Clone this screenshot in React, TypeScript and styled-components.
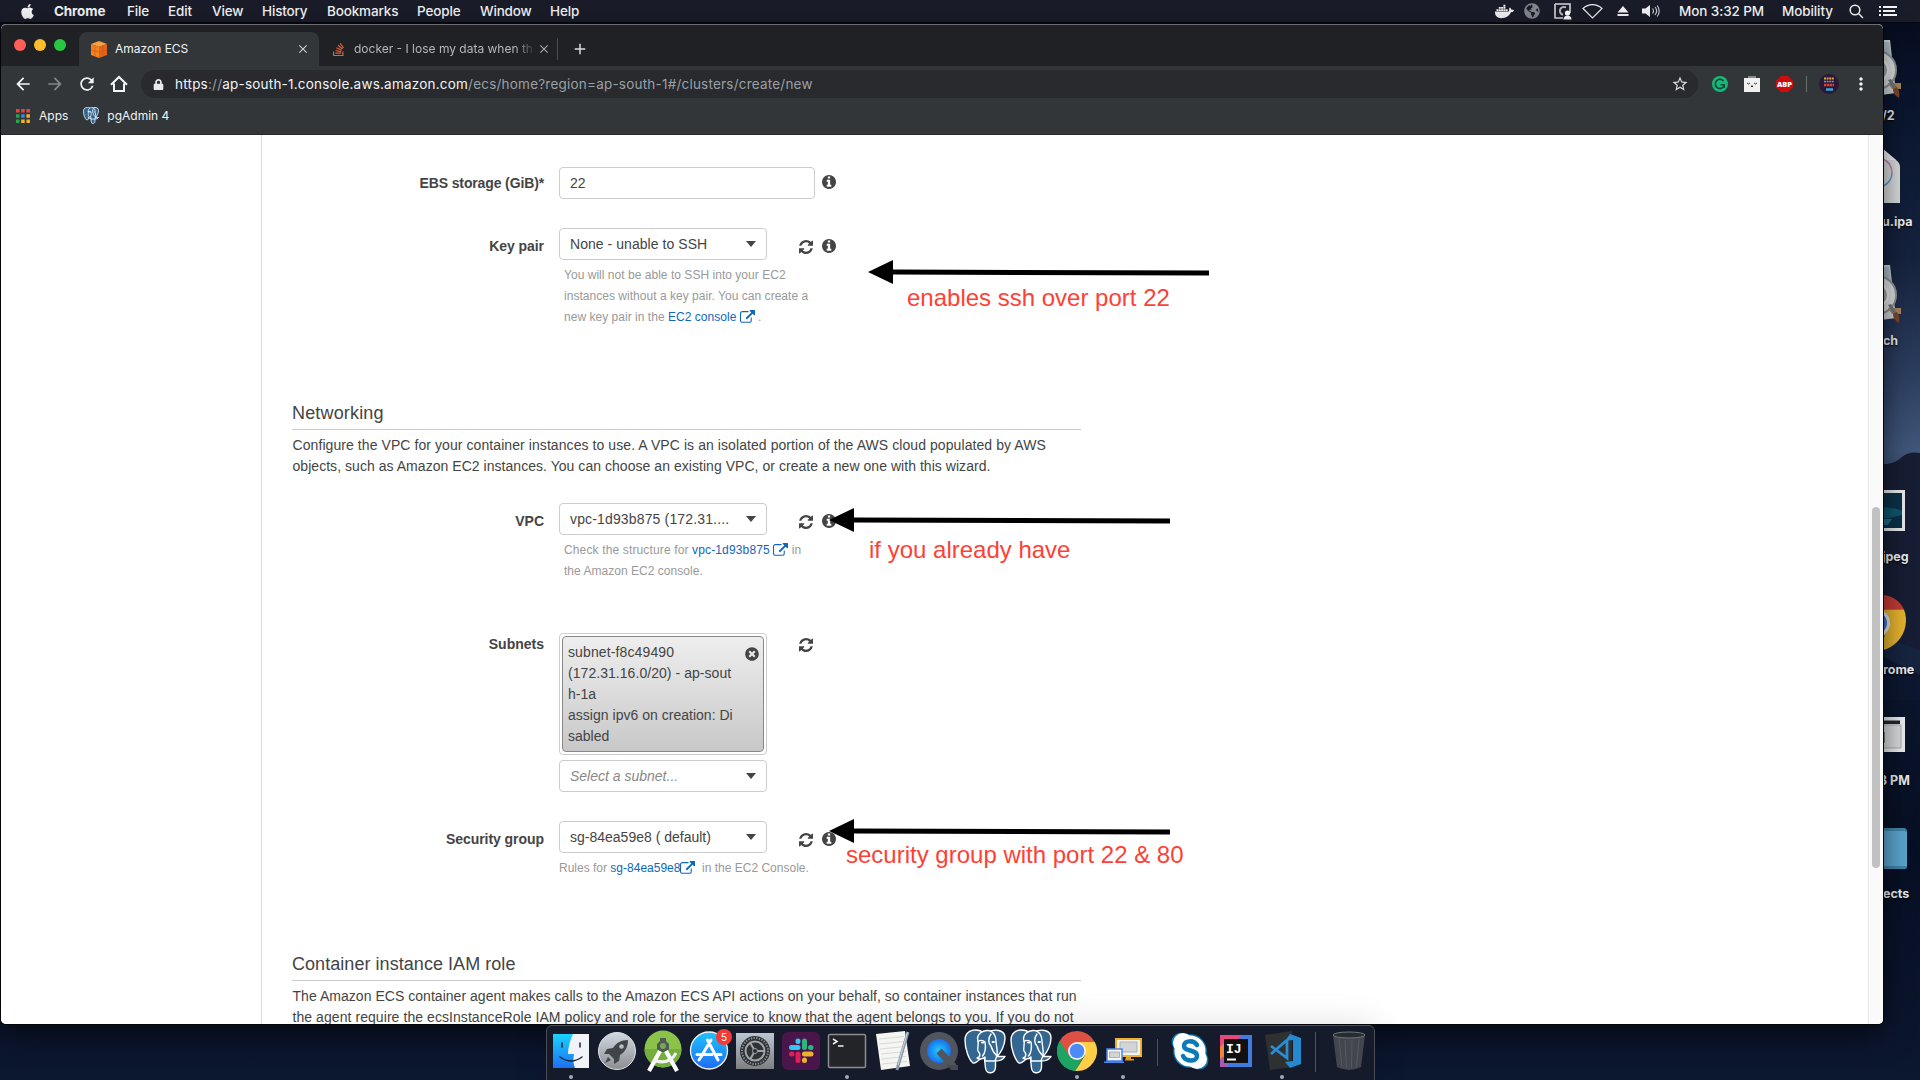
import React from 'react';
import styled, { createGlobalStyle, css } from 'styled-components';
import { FaApple, FaDocker, FaGlobeAmericas, FaTimesCircle, FaLock, FaSkype, FaStackOverflow } from 'react-icons/fa';
import { MdArrowBack, MdArrowForward, MdRefresh, MdStarBorder, MdMoreVert, MdClose, MdAdd } from 'react-icons/md';

const UI = `Inter, Roboto, "Liberation Sans", sans-serif`;
const TEXT = `"Liberation Sans", Arial, sans-serif`;

const Global = createGlobalStyle`
  *, *::before, *::after { box-sizing: border-box; }
  html, body { margin: 0; padding: 0; overflow: hidden; background: #0a1228; }
  svg { display: block; flex: none; }
`;

const Desktop = styled.div`
  position: relative;
  width: 1920px;
  height: 1080px;
  overflow: hidden;
  font-family: ${UI};
  background: linear-gradient(180deg, #070d20 22px, #0b1730 120px, #16233f 260px, #2b3d5e 370px, #40567a 450px, #0c1730 640px, #070f24 850px, #0c1730 1080px);
`;

const Wallpaper = styled.svg`
  position: absolute;
  left: 1880px;
  top: 440px;
`;

/* ---------- menu bar ---------- */
const MenuBar = styled.header`
  position: relative;
  display: flex;
  align-items: center;
  height: 23px;
  padding: 0 23px 0 19px;
  background: #1a1c29;
  border-bottom: 1px solid #050812;
  color: #f4f4f6;
`;
const MenuList = styled.nav`
  display: flex;
  align-items: center;
  gap: 19px;
  margin-left: 18px;
`;
const MenuItem = styled.span<{ $w: number; $bold?: boolean }>`
  width: ${p => p.$w}px;
  font-size: 13.5px;
  line-height: 22px;
  letter-spacing: -0.15px;
  font-weight: ${p => (p.$bold ? 700 : 500)};
  white-space: nowrap;
`;
const Status = styled.div`
  display: flex;
  align-items: center;
  margin-left: auto;
`;
const StatusSlot = styled.span<{ $w: number }>`
  display: flex;
  align-items: center;
  width: ${p => p.$w}px;
  font-size: 13.5px;
  font-weight: 500;
  letter-spacing: -0.1px;
  white-space: nowrap;
`;

/* ---------- desktop files ---------- */
const DesktopFile = styled.div<{ $top: number }>`
  position: absolute;
  left: 1883px;
  top: ${p => p.$top}px;
  width: 36px;
`;
const FileLabel = styled.div<{ $top: number; $left?: number }>`
  position: absolute;
  left: ${p => p.$left ?? 1884}px;
  top: ${p => p.$top}px;
  color: #e9ebef;
  font-size: 12.5px;
  font-weight: 700;
  line-height: 16px;
  white-space: nowrap;
  text-shadow: 0 1px 2px #000;
`;

/* ---------- browser ---------- */
const Browser = styled.section`
  position: absolute;
  left: 1px;
  top: 24px;
  width: 1882px;
  height: 1000px;
  display: flex;
  flex-direction: column;
  overflow: hidden;
  border-radius: 5px;
  background: #fff;
  box-shadow: 0 0 0 1px #04060c, 0 10px 30px rgba(0, 0, 0, 0.6);
`;
const TabStrip = styled.div`
  display: flex;
  align-items: flex-end;
  height: 42px;
  padding-left: 13px;
  background: #202124;
  border-top: 1px solid #6c6d6f;
  border-radius: 5px 5px 0 0;
  color: #e8eaed;
`;
const Lights = styled.div`
  display: flex;
  gap: 8px;
  width: 65px;
  padding-bottom: 15px;
`;
const Light = styled.i<{ $c: string }>`
  width: 12px;
  height: 12px;
  border-radius: 50%;
  background: ${p => p.$c};
`;
const Tab = styled.div<{ $active?: boolean }>`
  display: flex;
  align-items: center;
  height: 34px;
  font-size: 12px;
  line-height: 16px;
  white-space: nowrap;
  ${p =>
    p.$active
      ? css`
          width: 240px;
          padding: 0 9px 0 12px;
          background: #323639;
          border-radius: 8px 8px 0 0;
          color: #f1f3f4;
        `
      : css`
          width: 239px;
          padding: 0 8px 0 12px;
          border-right: 1px solid #4a4c50;
          height: 22px;
          margin-bottom: 6px;
          color: #b4b7bb;
        `}
`;
const TabTitle = styled.span<{ $fade?: boolean }>`
  flex: 1;
  margin: 0 4px 0 8px;
  ${p => p.$fade && css`
    -webkit-mask-image: linear-gradient(90deg, #000 90%, rgba(0, 0, 0, 0.15));
    mask-image: linear-gradient(90deg, #000 90%, rgba(0, 0, 0, 0.15));
  `}
`;
const NewTab = styled.span`
  display: flex;
  align-items: center;
  height: 34px;
  margin-left: 13px;
`;
const Toolbar = styled.div`
  display: flex;
  align-items: center;
  height: 36px;
  padding-left: 12px;
  background: #323639;
  color: #f5f6f7;
`;
const NavSlot = styled.span<{ $dim?: boolean }>`
  width: 32px;
  display: flex;
  align-items: center;
  color: ${p => (p.$dim ? '#85888b' : '#f5f6f7')};
`;
const Address = styled.div`
  display: flex;
  align-items: center;
  width: 1557px;
  height: 28px;
  padding: 0 9px 0 12px;
  border-radius: 14px;
  background: #282a2e;
  color: #9aa0a6;
  font-size: 13.5px;
`;
const Url = styled.span`
  flex: 1;
  margin-left: 11px;
  white-space: nowrap;
  letter-spacing: 0.215px;
`;
const Host = styled.span`
  color: #f1f3f4;
`;
const Extension = styled.span<{ $ml: number }>`
  margin-left: ${p => p.$ml}px;
`;
const Bookmarks = styled.div`
  display: flex;
  align-items: center;
  height: 33px;
  padding: 0 0 5px 15px;
  background: #323639;
  border-bottom: 1px solid #27292b;
  color: #f1f3f4;
  font-size: 12px;
`;
const Bookmark = styled.span<{ $ml?: number; $gap: number }>`
  display: flex;
  align-items: center;
  gap: ${p => p.$gap}px;
  margin-left: ${p => p.$ml ?? 0}px;
  line-height: 16px;
  white-space: nowrap;
`;

/* ---------- page ---------- */
const Page = styled.main`
  flex: 1;
  display: flex;
  min-height: 0;
  background: #fff;
  font-family: ${TEXT};
  font-size: 14px;
  line-height: 21px;
  color: #444;
`;
const SideNav = styled.aside`
  width: 261px;
  border-right: 1px solid #ddd;
`;
const Content = styled.div`
  width: 789px;
  margin-left: 30px;
  overflow: hidden;
`;
const ScrollTrack = styled.div`
  width: 15px;
  margin-left: auto;
  padding: 372px 3px 0;
  background: #fafafa;
  border-left: 1px solid #e6e6e6;
`;
const Thumb = styled.div`
  width: 8px;
  height: 361px;
  border-radius: 4px;
  background: #c1c1c1;
`;
const Row = styled.div<{ $mt: number }>`
  display: flex;
  align-items: flex-start;
  margin-top: ${p => p.$mt}px;
`;
const Label = styled.label<{ $pt: number; $ls?: number }>`
  width: 252px;
  margin-right: 15px;
  padding-top: ${p => p.$pt}px;
  text-align: right;
  font-weight: 700;
  letter-spacing: ${p => p.$ls ?? 0}px;
`;
const ControlLine = styled.div`
  display: flex;
  align-items: flex-start;
`;
const Field = styled.div<{ $w: number; $placeholder?: boolean; $ls?: number }>`
  display: flex;
  align-items: center;
  justify-content: space-between;
  width: ${p => p.$w}px;
  height: 32px;
  padding: 0 10px;
  border: 1px solid #ccc;
  border-radius: 4px;
  background: #fff;
  white-space: nowrap;
  letter-spacing: ${p => p.$ls ?? 0}px;
  ${p => p.$placeholder && css`
    margin-top: 5px;
    color: #888;
    font-style: italic;
  `}
`;
const Caret = styled.i`
  border: 5px solid transparent;
  border-top: 6px solid #444;
  border-bottom: 0;
`;
const Actions = styled.div<{ $ml: number; $pt: number }>`
  display: flex;
  align-items: flex-start;
  gap: 9px;
  margin-left: ${p => p.$ml}px;
  padding-top: ${p => p.$pt}px;
  color: #444;
`;
const Help = styled.p<{ $pl?: number }>`
  margin: 5px 0 0;
  padding-left: ${p => p.$pl ?? 5}px;
  font-size: 12px;
  color: #999;
`;
const Line = styled.span<{ $ls?: number }>`
  display: block;
  height: 21px;
  letter-spacing: ${p => p.$ls ?? 0}px;
  white-space: nowrap;
`;
const Link = styled.a`
  color: #0f67bd;
  svg { display: inline-block; vertical-align: -4px; }
`;
const Heading = styled.h2<{ $mt: number; $ls: number }>`
  margin: ${p => p.$mt}px 0 5px;
  height: 28px;
  border-bottom: 1px solid #ccc;
  font-size: 18px;
  font-weight: 400;
  line-height: 23px;
  letter-spacing: ${p => p.$ls}px;
`;
const Copy = styled.p`
  margin: 0;
  padding-left: 0.5px;
`;
const TagBox = styled.div`
  width: 208px;
  height: 122px;
  padding: 2px;
  border: 1px solid #ccc;
  border-radius: 4px;
`;
const Tag = styled.div`
  display: flex;
  justify-content: space-between;
  height: 116px;
  padding: 5px 4px 0 5px;
  border: 1px solid #888;
  border-radius: 4px;
  background: linear-gradient(#eee, #c8c8c8);
`;
const TagIcon = styled.span`
  padding-top: 5px;
`;

/* ---------- annotations ---------- */
const Arrow = styled.svg<{ $x: number; $y: number }>`
  position: absolute;
  left: ${p => p.$x}px;
  top: ${p => p.$y}px;
`;
const Note = styled.span<{ $x: number; $y: number }>`
  position: absolute;
  left: ${p => p.$x}px;
  top: ${p => p.$y}px;
  color: #ff3f35;
  font-family: ${TEXT};
  font-size: 24px;
  line-height: 28px;
  white-space: nowrap;
`;

/* ---------- dock ---------- */
const Dock = styled.footer`
  position: absolute;
  left: 546px;
  top: 1025px;
  width: 829px;
  height: 60px;
  display: flex;
  padding-left: 1px;
  border: 1px solid #4b4e57;
  border-radius: 6px;
  background: #161b2b;
  box-shadow: 0 0 34px rgba(0, 0, 0, 0.13);
`;
const DockItem = styled.div`
  position: relative;
  flex: none;
  display: flex;
  flex-direction: column;
  align-items: center;
  width: 46px;
  padding-top: 3px;
`;
const Running = styled.i`
  width: 4px;
  height: 4px;
  border-radius: 50%;
  background: #a5a8ae;
`;
const Badge = styled.span`
  position: absolute;
  left: 30px;
  top: 3px;
  width: 16px;
  height: 16px;
  border-radius: 50%;
  background: #f23b36;
  color: #fff;
  font-size: 10px;
  line-height: 16px;
  text-align: center;
`;
const DockRule = styled.i<{ $h: number; $mt: number; $ml: number; $mr: number }>`
  flex: none;
  width: 1px;
  height: ${p => p.$h}px;
  margin: ${p => p.$mt}px ${p => p.$mr}px 0 ${p => p.$ml}px;
  background: #4e525c;
`;

/* ---------- icons ---------- */
const RefreshIcon = () => (
  <svg width="14" height="15" viewBox="0 -107 1536 1643" fill="#444">
    <path d="M1511 928q0 5-1 7-64 268-268 434.5t-478 166.5q-146 0-282.5-55t-243.5-157l-129 129q-19 19-45 19t-45-19-19-45v-448q0-26 19-45t45-19h448q26 0 45 19t19 45-19 45l-137 137q71 66 161 102t187 36q134 0 250-65t186-179q11-17 53-117 8-23 30-23h192q13 0 22.5 9.5t9.5 22.5zm25-800v448q0 26-19 45t-45 19h-448q-26 0-45-19t-19-45 19-45l138-138q-148-137-349-137-134 0-250 65t-186 179q-11 17-53 117-8 23-30 23h-199q-13 0-22.5-9.5t-9.5-22.5v-7q65-268 270-434.5t480-166.5q146 0 284 55.5t245 156.5l130-129q19-19 45-19t45 19 19 45z" />
  </svg>
);
const InfoIcon = () => (
  <svg width="14" height="14" viewBox="0 0 1536 1536" fill="#444">
    <path d="M1024 1248v-160q0-14-9-23t-23-9h-96v-512q0-14-9-23t-23-9h-320q-14 0-23 9t-9 23v160q0 14 9 23t23 9h96v320h-96q-14 0-23 9t-9 23v160q0 14 9 23t23 9h448q14 0 23-9t9-23zm-128-896v-160q0-14-9-23t-23-9h-192q-14 0-23 9t-9 23v160q0 14 9 23t23 9h192q14 0 23-9t9-23zm640 416q0 209-103 385.5t-279.5 279.5-385.5 103-385.5-103-279.5-279.5-103-385.5 103-385.5 279.5-279.5 385.5-103 385.5 103 279.5 279.5 103 385.5z" />
  </svg>
);
const External = () => (
  <svg width="15" height="15" viewBox="0 0 1792 1792" fill="currentColor">
    <path d="M1408 928v320q0 119-84.5 203.5t-203.5 84.5h-832q-119 0-203.5-84.5t-84.5-203.5v-832q0-119 84.5-203.5t203.5-84.5h704q14 0 23 9t9 23v64q0 14-9 23t-23 9h-704q-66 0-113 47t-47 113v832q0 66 47 113t113 47h832q66 0 113-47t47-113v-320q0-14 9-23t23-9h64q14 0 23 9t9 23zm384-864v512q0 26-19 45t-45 19-45-19l-176-176-652 652q-10 10-23 10t-23-10l-114-114q-10-10-10-23t10-23l652-652-176-176q-19-19-19-45t19-45 45-19h512q26 0 45 19t19 45z" />
  </svg>
);
const Elephant = ({ width, height, stroke = 1.4 }: { width: number; height: number; stroke?: number }) => (
  <svg width={width} height={height} viewBox="0 0 42 45" fill="#336791" stroke="#fff" strokeWidth={stroke} strokeLinejoin="round" strokeLinecap="round">
    <path d="M24 3C30 0 41 0 41 9C41 16 37 24 33 27.500L41 27.500C39 31 35 32 31.500 32L31.500 38C31 45.500 22 45.500 21.500 39L20.500 30L16 24Z" />
    <path d="M17 2C8 -1 1 3 1 11C1 20 5 31 9 34C12 35 15 31 18 28L20 14Z" />
    <path d="M14 12C12 6 18 1 24 1.500C30 2 32 8 32 12C32 17 34 20 33 26.500L31 32L21 32L21 28C18 31 14 30 13 29C17 28 16 24 14 22C13 18 15 16 14 12Z" />
    <path d="M14 12.500Q18 10 21 13C22 19 22 23 18.500 27" fill="none" />
    <path d="M27 5C24 9 24 14 27 17C28 21 30 24 33 27" fill="none" />
    <path d="M18 13.500h1.500M28.500 13h1.500" stroke="#fff" strokeWidth="1.800" />
  </svg>
);
const ChromeIcon = ({ size }: { size: number }) => (
  <svg width={size} height={size} viewBox="0 0 40 40">
    <path d="M20 20 20 40A20 20 0 0 1 2.680 10Z" fill="#1da362" />
    <path d="M20 20 20 40A20 20 0 0 1 2.680 10L12.200 25L20 29 27 25 18.300 40Z" fill="#1da362" />
    <path d="M20 11H37.800A20 20 0 0 0 20 0 20 20 0 0 0 2.700 10l9.500 15Z" fill="#dd5144" />
    <path d="M20 11H37.800A20 20 0 0 1 18.300 39.900L27.800 24.500Z" fill="#ffcd46" />
    <circle cx="20" cy="20" r="9" fill="#f1f1f1" />
    <circle cx="20" cy="20" r="7.300" fill="#4c8bf5" />
  </svg>
);
const Disk = () => (
  <svg width="36" height="62" viewBox="0 0 36 62">
    <path d="M-8 0H7L13 53-8 56Z" fill="#cdd3d6" />
    <path d="M0 2H6L9 22H0Z" fill="#a9bcc4" />
    <circle cx="-6" cy="30" r="19" fill="#dfe0e1" stroke="#8e9499" strokeWidth="2" />
    <circle cx="-6" cy="30" r="11" fill="#a3a7aa" stroke="#efefef" strokeWidth="2" />
    <path d="M5 43h13v6H9Z" fill="#a9855a" />
    <path d="m5 40 3-1 6 9-3 2Z" fill="#6f777d" />
    <path d="M10 49l4-2c2 3 3 6 2 11-4-2-6-5-6-9Z" fill="#7b452b" />
  </svg>
);

const arrows = [
  { x: 868, y: 260, w: 341 },
  { x: 829, y: 508, w: 341 },
  { x: 829, y: 819, w: 341 },
];

export default function App() {
  return (
    <Desktop>
      <Global />
      <Wallpaper width="40" height="260" viewBox="0 0 40 260">
        <path d="M0 25C10 23 14 24 22 17 28 12 34 12 40 13V210H0Z" fill="#171d34" />
        <path d="M0 196 40 210V250H0Z" fill="#16243f" />
        <path d="M0 215 40 235V260H0Z" fill="#0d1731" />
      </Wallpaper>

      <MenuBar>
        <FaApple size={17} />
        <MenuList>
          <MenuItem $w={54} $bold>Chrome</MenuItem>
          <MenuItem $w={22}>File</MenuItem>
          <MenuItem $w={25}>Edit</MenuItem>
          <MenuItem $w={31}>View</MenuItem>
          <MenuItem $w={46}>History</MenuItem>
          <MenuItem $w={71}>Bookmarks</MenuItem>
          <MenuItem $w={44}>People</MenuItem>
          <MenuItem $w={51}>Window</MenuItem>
          <MenuItem $w={30}>Help</MenuItem>
        </MenuList>
        <Status>
          <StatusSlot $w={29}><FaDocker size={19} /></StatusSlot>
          <StatusSlot $w={30}><FaGlobeAmericas size={16} color="#85878e" /></StatusSlot>
          <StatusSlot $w={28}>
            <svg width="18" height="17" viewBox="0 0 18 17" fill="none">
              <path d="M1 1H16V10M1 1V15H9" stroke="#d7d8da" strokeWidth="1.6" />
              <path d="M12 4.5A4 4 0 1 0 9 11.8" stroke="#b8babd" strokeWidth="2" />
              <circle cx="13.5" cy="10" r="2.6" fill="#fff" />
              <path d="M9.5 16.5c0-3 2-4 4-4s4 1 4 4Z" fill="#fff" />
            </svg>
          </StatusSlot>
          <StatusSlot $w={35}>
            <svg width="21" height="16" viewBox="0 0 21 16">
              <path d="M1 5.500C6.500 .3 14.500 .3 20 5.500L10.500 15Z" fill="none" stroke="#eee" strokeWidth="1.2" />
            </svg>
          </StatusSlot>
          <StatusSlot $w={25}>
            <svg width="12" height="12" viewBox="0 0 12 12" fill="#f4f4f6"><path d="M6 1 11.500 7.500H.5ZM.5 9h11v2H.5Z" /></svg>
          </StatusSlot>
          <StatusSlot $w={37}>
            <svg width="18" height="14" viewBox="0 0 18 14">
              <path d="M0 4.500H3.500L8 1V13L3.500 9.500H0Z" fill="#f4f4f6" />
              <path d="M10.500 4.500q2 2.500 0 5M13 3q3.300 4 0 8M15.200 1.500q4 5.500 0 11" fill="none" stroke="#d0d1d5" strokeWidth="1.100" />
            </svg>
          </StatusSlot>
          <StatusSlot $w={103}>Mon 3:32 PM</StatusSlot>
          <StatusSlot $w={67}>Mobility</StatusSlot>
          <StatusSlot $w={30}>
            <svg width="15" height="15" viewBox="0 0 15 15" fill="none" stroke="#f4f4f6" strokeWidth="1.500">
              <circle cx="6" cy="6" r="4.800" /><path d="m9.500 9.500 4.500 4.500" />
            </svg>
          </StatusSlot>
          <svg width="18" height="12" viewBox="0 0 18 12" fill="#f4f4f6">
            <path d="M0 1h2v2H0ZM4 1h14v2H4ZM0 5h2v2H0ZM4 5h12v2H4ZM0 9h2v2H0ZM4 9h14v2H4Z" />
          </svg>
        </Status>
      </MenuBar>

      <DesktopFile $top={40}><Disk /></DesktopFile>
      <FileLabel $top={108} $left={1882}>/2</FileLabel>
      <DesktopFile $top={149}>
        <svg width="36" height="55" viewBox="0 0 36 55">
          <path d="M0 0 13 11Q17 14 17 18V54H0Z" fill="#dadbdc" />
          <path d="M0 11H13L0 0Z" fill="#f0f0f0" />
          <path d="M0 10C6 13 9 18 9 24" fill="none" stroke="#b77fb0" strokeWidth="1.500" />
          <path d="M9 24C9 30 5 35 0 37" fill="none" stroke="#4f9ed0" strokeWidth="1.500" />
        </svg>
      </DesktopFile>
      <FileLabel $top={214} $left={1882}>u.ipa</FileLabel>
      <DesktopFile $top={265}><Disk /></DesktopFile>
      <FileLabel $top={333} $left={1883}>ch</FileLabel>
      <DesktopFile $top={487}>
        <svg width="36" height="45" viewBox="0 0 36 45">
          <path d="M0 3H22V44H0Z" fill="#e8ebec" />
          <path d="M0 6H19V41H0Z" fill="#0b3147" />
          <path d="M0 20C8 22 12 20 19 24V28L6 31H0Z" fill="#0d566e" />
          <path d="M0 32h9l-4 6H0Z" fill="#1d6784" />
        </svg>
      </DesktopFile>
      <FileLabel $top={549} $left={1882}>jpeg</FileLabel>
      <DesktopFile $top={594}>
        <svg width="36" height="57" viewBox="0 0 36 57">
          <path d="M0 1C10 2 17 7 21 15.500H0Z" fill="#c23b34" />
          <path d="M0 15.500H21C25 26 23 38 15 47 10 52 5 55 0 56Z" fill="#e5b32f" />
          <circle cx="-7" cy="29" r="14" fill="#dfe3ea" /><circle cx="-7" cy="29" r="11" fill="#3f72c4" />
          <path d="M0 40 2 42 0 46Z" fill="#2b8a4e" />
        </svg>
      </DesktopFile>
      <FileLabel $top={662} $left={1883}>rome</FileLabel>
      <DesktopFile $top={717}>
        <svg width="36" height="36" viewBox="0 0 36 36">
          <path d="M0 0H22V35H0Z" fill="#eceeef" /><path d="M0 3.500H17V7H0Z" fill="#23272c" />
          <path d="M0 8H18V31H0Z" fill="#d9dbdc" stroke="#a9acae" /><path d="M0 15h1.500v11H0Z" fill="#222" />
        </svg>
      </DesktopFile>
      <FileLabel $top={773} $left={1879}>3 PM</FileLabel>
      <DesktopFile $top={828}>
        <svg width="36" height="42" viewBox="0 0 36 42">
          <path d="M0 0H21Q24 0 24 4V39Q24 41 22 41H0Z" fill="#3f84aa" />
          <path d="M0 3H21Q24 3 24 5V38H0Z" fill="#5ba5cf" />
        </svg>
      </DesktopFile>
      <FileLabel $top={886} $left={1883}>ects</FileLabel>

      <Browser>
        <TabStrip>
          <Lights><Light $c="#ff5f57" /><Light $c="#ffbd2e" /><Light $c="#28c940" /></Lights>
          <Tab $active>
            <svg width="16" height="17" viewBox="0 0 16 17">
              <path d="M8 0 16 3 8 6 0 3Z" fill="#f9a13a" /><path d="M0 3 8 6V17L0 14Z" fill="#f58220" /><path d="M16 3 8 6V17L16 14Z" fill="#e4641a" />
              <path d="M0 9 8 11 16 9M4 4.500V15.500M12 4.500V15.500" stroke="#cf5a15" strokeWidth=".7" fill="none" />
            </svg>
            <TabTitle>Amazon ECS</TabTitle>
            <MdClose size={14} color="#c9cbce" />
          </Tab>
          <Tab>
            <FaStackOverflow size={15} color="#e0633a" />
            <TabTitle $fade>docker - I lose my data when th</TabTitle>
            <MdClose size={14} color="#a4a7aa" />
          </Tab>
          <NewTab><MdAdd size={18} color="#d9dbde" /></NewTab>
        </TabStrip>
        <Toolbar>
          <NavSlot><MdArrowBack size={20} /></NavSlot>
          <NavSlot $dim><MdArrowForward size={20} /></NavSlot>
          <NavSlot><MdRefresh size={20} /></NavSlot>
          <NavSlot>
            <svg width="19" height="18" viewBox="-1 0 19 18" fill="none" stroke="#f5f6f7" strokeWidth="2">
              <path d="M1 9.700 9 2l8 7.700M4 8.500V16H14V8.500" />
            </svg>
          </NavSlot>
          <Address>
            <FaLock size={11} color="#e8eaed" />
            <Url><Host>https</Host>://<Host>ap-south-1.console.aws.amazon.com</Host>/ecs/home?region=ap-south-1#/clusters/create/new</Url>
            <MdStarBorder size={18} color="#dadce0" />
          </Address>
          <Extension $ml={14}>
            <svg width="16" height="16" viewBox="0 0 16 16">
              <circle cx="8" cy="8" r="8" fill="#15b877" />
              <path d="M11.500 5A4.600 4.600 0 1 0 12 10M8.500 8.800H12.200V12" fill="none" stroke="#17433a" strokeWidth="1.600" />
            </svg>
          </Extension>
          <Extension $ml={16}>
            <svg width="16" height="16" viewBox="0 0 16 16">
              <path d="M4 0h8v2H4Z" fill="#8a8c8f" /><path d="M0 2h16v14H0Z" fill="#f1f1f1" />
              <path d="M3 7q1.500 2 3 0M10 7q1.500 2 3 0M7 10h2l-1 1Z" fill="none" stroke="#333" strokeWidth="1" />
            </svg>
          </Extension>
          <Extension $ml={16}>
            <svg width="17" height="16" viewBox="0 0 17 16">
              <path d="M5 0h7l5 5v6l-5 5H5L0 11V5Z" fill="#d10a0a" />
              <text x="8.500" y="11" textAnchor="middle" fontFamily="Open Sans" fontWeight="800" fontSize="7.500" fill="#fff">ABP</text>
            </svg>
          </Extension>
          <Extension $ml={13}><svg width="1" height="16"><rect width="1" height="16" fill="#6a6d70" /></svg></Extension>
          <Extension $ml={12}>
            <svg width="20" height="20" viewBox="0 0 20 20">
              <circle cx="10" cy="10" r="10" fill="#2b1836" />
              <path d="M5 4.500h10" stroke="#d9a441" strokeWidth="2" strokeDasharray="2 .6" /><path d="M5 7.500h10" stroke="#8e8e98" strokeWidth="1.500" strokeDasharray="2 .6" />
              <path d="M5 11h10" stroke="#d8432f" strokeWidth="2.500" strokeDasharray="2.500 .5" /><path d="M7 15.500h7" stroke="#37a8d8" strokeWidth="2.500" />
            </svg>
          </Extension>
          <Extension $ml={12}><MdMoreVert size={20} /></Extension>
        </Toolbar>
        <Bookmarks>
          <Bookmark $gap={9}>
            <svg width="14" height="14" viewBox="0 0 14 14">
              <path d="M0 0h3.500v3.500H0ZM5.200 0h3.500v3.500H5.200ZM10.400 0h3.500v3.500h-3.500Z" fill="#e8453c" />
              <path d="M0 5.200h3.500v3.500H0ZM0 10.400h3.500v3.500H0Z" fill="#2ba24c" />
              <path d="M5.200 5.200h3.500v3.500H5.200Z" fill="#3b82f3" />
              <path d="M10.400 5.200h3.500v3.500h-3.500ZM5.200 10.400h3.500v3.500H5.200ZM10.400 10.400h3.500v3.500h-3.500Z" fill="#f2b32a" />
            </svg>
            Apps
          </Bookmark>
          <Bookmark $ml={15} $gap={8}><Elephant width={16} height={17} stroke={2} />pgAdmin 4</Bookmark>
        </Bookmarks>

        <Page>
          <SideNav />
          <Content>
            <Row $mt={32}>
              <Label $pt={6} $ls={-0.13}>EBS storage (GiB)*</Label>
              <ControlLine>
                <Field $w={256}>22</Field>
                <Actions $ml={7} $pt={8}><InfoIcon /></Actions>
              </ControlLine>
            </Row>
            <Row $mt={29}>
              <Label $pt={8} $ls={-0.05}>Key pair</Label>
              <div>
                <ControlLine>
                  <Field $w={208} $ls={0.05}>None - unable to SSH<Caret /></Field>
                  <Actions $ml={32} $pt={11}><RefreshIcon /><InfoIcon /></Actions>
                </ControlLine>
                <Help>
                  <Line $ls={0.03}>You will not be able to SSH into your EC2</Line>
                  <Line $ls={0.03}>instances without a key pair. You can create a</Line>
                  <Line $ls={0.03}>new key pair in the <Link>EC2 console <External /></Link> .</Line>
                </Help>
              </div>
            </Row>
            <Heading $mt={74} $ls={0.17}>Networking</Heading>
            <Copy>
              <Line $ls={0.076}>Configure the VPC for your container instances to use. A VPC is an isolated portion of the AWS cloud populated by AWS</Line>
              <Line $ls={0.042}>objects, such as Amazon EC2 instances. You can choose an existing VPC, or create a new one with this wizard.</Line>
            </Copy>
            <Row $mt={26}>
              <Label $pt={8}>VPC</Label>
              <div>
                <ControlLine>
                  <Field $w={208} $ls={0.15}>vpc-1d93b875 (172.31....<Caret /></Field>
                  <Actions $ml={32} $pt={11}><RefreshIcon /><InfoIcon /></Actions>
                </ControlLine>
                <Help>
                  <Line $ls={0.14}>Check the structure for <Link>vpc-1d93b875 <External /></Link> in</Line>
                  <Line $ls={0.03}>the Amazon EC2 console.</Line>
                </Help>
              </div>
            </Row>
            <Row $mt={51}>
              <Label $pt={1}>Subnets</Label>
              <div>
                <ControlLine>
                  <TagBox>
                    <Tag>
                      <div>
                        <Line $ls={0.12}>subnet-f8c49490</Line>
                        <Line $ls={0.05}>(172.31.16.0/20) - ap-sout</Line>
                        <Line>h-1a</Line>
                        <Line $ls={0.02}>assign ipv6 on creation: Di</Line>
                        <Line>sabled</Line>
                      </div>
                      <TagIcon><FaTimesCircle size={14} /></TagIcon>
                    </Tag>
                  </TagBox>
                  <Actions $ml={32} $pt={4}><RefreshIcon /></Actions>
                </ControlLine>
                <Field $w={208} $placeholder>Select a subnet...<Caret /></Field>
              </div>
            </Row>
            <Row $mt={29}>
              <Label $pt={8} $ls={-0.05}>Security group</Label>
              <div>
                <ControlLine>
                  <Field $w={208}>sg-84ea59e8 ( default)<Caret /></Field>
                  <Actions $ml={32} $pt={11}><RefreshIcon /><InfoIcon /></Actions>
                </ControlLine>
                <Help $pl={0}>
                  <Line>Rules for <Link>sg-84ea59e8<External /></Link>&nbsp; in the EC2 Console.</Line>
                </Help>
              </div>
            </Row>
            <Heading $mt={74} $ls={0.05}>Container instance IAM role</Heading>
            <Copy>
              <Line $ls={0.036}>The Amazon ECS container agent makes calls to the Amazon ECS API actions on your behalf, so container instances that run</Line>
              <Line $ls={0.066}>the agent require the ecsInstanceRole IAM policy and role for the service to know that the agent belongs to you. If you do not</Line>
            </Copy>
          </Content>
          <ScrollTrack><Thumb /></ScrollTrack>
        </Page>
      </Browser>

      {arrows.map(a => (
        <Arrow key={a.y} $x={a.x} $y={a.y} width={a.w} height="26" viewBox="0 0 341 26">
          <path d="M0 12 25 0V9.500L341 10.500V15.500L25 14.500V24Z" fill="#000" />
        </Arrow>
      ))}
      <Note $x={907} $y={284}>enables ssh over port 22</Note>
      <Note $x={869} $y={536}>if you already have</Note>
      <Note $x={846} $y={841}>security group with port 22 &amp; 80</Note>

      <Dock>
        <DockItem>
          <svg width="40" height="46" viewBox="0 0 40 46">
            <defs><linearGradient id="fi" x2="0" y2="1"><stop stopColor="#19d3fd" /><stop offset="1" stopColor="#1e70f2" /></linearGradient></defs>
            <path d="M2 5H38V39H2Z" fill="#f1f3f8" />
            <path d="M2 5H22C19 12 17 18 17 25H23C22 30 22 35 24 39H2Z" fill="url(#fi)" />
            <path d="M11 14v4M29 14v4M9 28q11 8 22 0" fill="none" stroke="#16243a" strokeWidth="1.500" strokeLinecap="round" />
          </svg>
          <Running />
        </DockItem>
        <DockItem>
          <svg width="40" height="46" viewBox="0 0 40 46">
            <defs><linearGradient id="la" x2="0" y2="1"><stop stopColor="#cfd9e2" /><stop offset="1" stopColor="#8c8d91" /></linearGradient></defs>
            <circle cx="20" cy="22" r="18.500" fill="url(#la)" stroke="#dfe2e6" />
            <path d="M31 11C24 11 19 14 16 19L10 20 7 25 12 25 17 30 17 35 22 32 23 26C28 23 31 18 31 11ZM11 28l-3 6 6-3Z" fill="#414448" />
            <circle cx="24.500" cy="17.500" r="2.300" fill="#b9bec4" />
          </svg>
        </DockItem>
        <DockItem>
          <svg width="40" height="46" viewBox="0 0 40 46">
            <circle cx="20" cy="20" r="18.500" fill="#8bc34a" /><path d="M20 20H38.500A18.500 18.500 0 0 1 1.500 20Z" fill="#75ad3e" />
            <path d="M17 9h6v3l3 3v5l-3 3h-6l-3-3v-5l3-3Z" fill="#4c5b59" /><circle cx="20" cy="17" r="3" fill="#7ba84b" />
            <path d="M17 22 6 42M23 22 34 42" stroke="#fff" strokeWidth="4.200" /><path d="M10 31Q26 37 33 24" fill="none" stroke="#f2f2f2" strokeWidth="3" />
          </svg>
        </DockItem>
        <DockItem>
          <svg width="40" height="46" viewBox="0 0 40 46">
            <defs><linearGradient id="as" x2="0" y2="1"><stop stopColor="#1ec4fb" /><stop offset="1" stopColor="#1e6cf2" /></linearGradient></defs>
            <circle cx="20" cy="21.500" r="18.500" fill="url(#as)" stroke="#f2f5f8" strokeWidth="1.300" />
            <path d="M22 11 12 28M18.500 11 29 31M8 25.500H23M27 25.500H32M11 29.500 10 31" stroke="#fff" strokeWidth="3" strokeLinecap="round" />
          </svg>
          <Badge>5</Badge>
        </DockItem>
        <DockItem>
          <svg width="40" height="46" viewBox="0 0 40 46">
            <defs><linearGradient id="sp" x2="0" y2="1"><stop stopColor="#b9c6d3" /><stop offset="1" stopColor="#7e7f82" /></linearGradient></defs>
            <path d="M1 4H39V40H1Z" fill="url(#sp)" />
            <circle cx="20" cy="22" r="15" fill="#2f3236" /><circle cx="20" cy="22" r="13" fill="none" stroke="#8c8f93" strokeWidth="2" strokeDasharray="1.300 1.400" />
            <circle cx="20" cy="22" r="9.500" fill="none" stroke="#a2a5a8" strokeWidth="2" />
            <path d="M20 22H30M20 22 15 13.500M20 22 15 30.500" stroke="#a2a5a8" strokeWidth="2" /><circle cx="20" cy="22" r="2.500" fill="#26282b" stroke="#a2a5a8" />
          </svg>
        </DockItem>
        <DockItem>
          <svg width="40" height="46" viewBox="0 0 40 46">
            <rect x="1" y="3" width="38" height="38" rx="6" fill="#4a154b" />
            <g strokeWidth="5" strokeLinecap="round">
              <path d="M17 12.500V12M10.500 18.500H17" stroke="#36c5f0" /><path d="M23.500 12V18.500M29.500 18.500H30" stroke="#2eb67d" />
              <path d="M10.500 25H11M17 25V31.500" stroke="#e01e5a" /><path d="M23.500 25H30M23.500 31V31.500" stroke="#ecb22e" />
            </g>
          </svg>
        </DockItem>
        <DockItem>
          <svg width="40" height="46" viewBox="0 0 40 46">
            <rect x="1.500" y="5.500" width="37" height="33" rx="1.500" fill="#222427" stroke="#8b8e91" strokeWidth="1.500" />
            <path d="m6 10 4 2.500L6 15M11 17h5.500" fill="none" stroke="#f1f1f1" strokeWidth="1.500" />
          </svg>
          <Running />
        </DockItem>
        <DockItem>
          <svg width="40" height="46" viewBox="0 0 40 46">
            <path d="M3 5 32 2 37 37 8 41Z" fill="#f5f5f2" />
            <path d="M6 10 31 7.500M6.500 15 31 12.500M7 20 32 17.500M8 25 33 22.500M8.500 30 33 27.500M9 35 34 32.500" stroke="#cfd2d2" strokeWidth=".8" />
            <path d="M35 3 25 37 24 41" fill="none" stroke="#8798a8" strokeWidth="3" /><path d="M34.500 3 25 36" stroke="#c9d4de" strokeWidth="1" />
          </svg>
        </DockItem>
        <DockItem>
          <svg width="40" height="46" viewBox="0 0 40 46">
            <defs><radialGradient id="qt"><stop stopColor="#1fd0ff" /><stop offset="1" stopColor="#1b6fe8" /></radialGradient></defs>
            <circle cx="20" cy="22" r="19" fill="#50555e" /><circle cx="20" cy="22" r="12" fill="url(#qt)" />
            <path d="M20 22 35 38" stroke="#50555e" strokeWidth="7" /><path d="M28 36h11v5h-7Z" fill="#444952" />
          </svg>
        </DockItem>
        <DockItem><Elephant width={42} height={45} /></DockItem>
        <DockItem><Elephant width={42} height={45} /></DockItem>
        <DockItem>
          <svg width="40" height="46" viewBox="0 0 40 46"><g transform="translate(0 2)"><ChromeIcon size={40} /></g></svg>
          <Running />
        </DockItem>
        <DockItem>
          <svg width="40" height="46" viewBox="0 0 40 46">
            <path d="M13 10H38V27H13Z" fill="#f2f2f2" stroke="#f0b02c" strokeWidth="2" /><path d="M17 13H34V23H17Z" fill="#d3d4d5" stroke="#aeb0b2" />
            <path d="M23 28h5v2h3v1.500h-9Z" fill="#e2a020" />
            <path d="M4 20H19V32H4Z" fill="#f6f6f6" stroke="#4c86e8" strokeWidth="1.500" /><path d="M6.500 23H16.500V28.500H6.500Z" fill="#d3d4d5" stroke="#aeb0b2" />
            <path d="M1 32.500H21V34H1Z" fill="#4c86e8" />
          </svg>
          <Running />
        </DockItem>
        <DockRule $h={27} $mt={13} $ml={11} $mr={9} />
        <DockItem>
          <svg width="40" height="46" viewBox="0 0 40 46">
            <g color="#0b7bb8" stroke="#0b7bb8" strokeWidth="20"><svg x="-1" y="1" width="42" height="42" viewBox="0 0 42 42"><FaSkype size={42} /></svg></g>
            <circle cx="13" cy="14" r="10" fill="#fff" /><circle cx="20" cy="22" r="15.500" fill="#fff" /><circle cx="27" cy="30" r="10" fill="#fff" />
            <path d="M27 16C24 11 14 11 14 17 14 23 27 20 27 27 27 33 16 33 13 27" fill="none" stroke="#0b7bb8" strokeWidth="4.500" strokeLinecap="round" />
          </svg>
        </DockItem>
        <DockItem>
          <svg width="40" height="46" viewBox="0 0 40 46">
            <path d="M4 6H36V38H4Z" fill="#3f7be0" /><path d="M4 6H26L12 22H4Z" fill="#e8467f" /><path d="M4 18 12 22V38H4Z" fill="#a45bb0" /><path d="M4 18 8 14 10 26 4 30Z" fill="#f0823e" />
            <path d="M8 10H32V34H8Z" fill="#111" /><path d="M11 29.500h9v2h-9Z" fill="#fff" />
            <text x="10" y="24" fontFamily="Liberation Mono" fontWeight="700" fontSize="13" fill="#fff">IJ</text>
          </svg>
        </DockItem>
        <DockItem>
          <svg width="40" height="46" viewBox="0 0 40 46">
            <path d="M3 6 30 2V38L8 41Z" fill="#2f3032" /><path d="M28 5 39 9V35L28 39 23 33 31 32V11L23 12Z" fill="#2489cf" />
            <path d="M25 11V29L9 17M9 25 25 11" fill="none" stroke="#2a8ed6" strokeWidth="2.800" />
          </svg>
          <Running />
        </DockItem>
        <DockRule $h={40} $mt={6} $ml={10} $mr={10} />
        <DockItem>
          <svg width="40" height="46" viewBox="0 0 40 46">
            <path d="M4 6 8 38Q20 44 32 38L36 6Z" fill="#43474d" /><ellipse cx="20" cy="6" rx="16" ry="3" fill="#272b32" stroke="#70747a" />
            <path d="M10 10 13 38M16 11 17.500 39M23 11 22.500 39M30 10 27.500 38" stroke="#555a60" strokeWidth="1" />
          </svg>
        </DockItem>
      </Dock>
    </Desktop>
  );
}
